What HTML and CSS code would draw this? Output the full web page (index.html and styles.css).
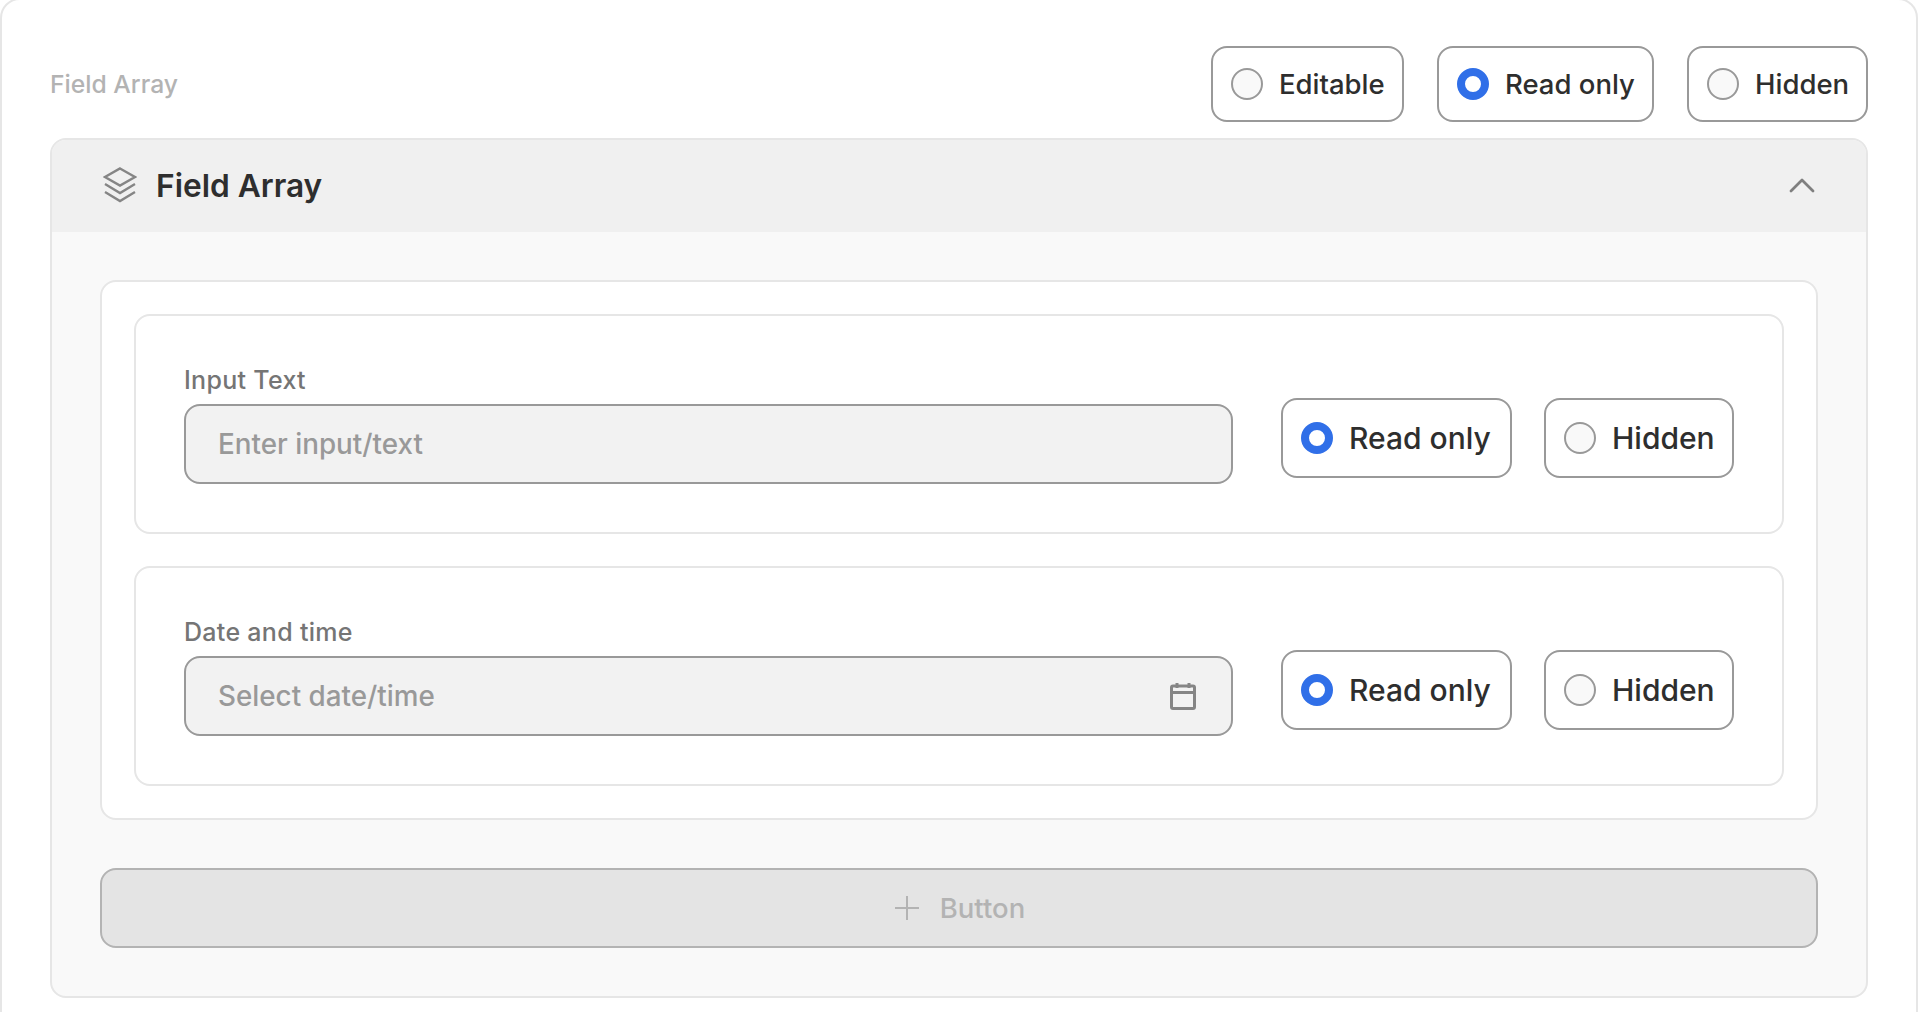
FILE: index.html
```html
<!DOCTYPE html>
<html lang="en">
<head>
<meta charset="utf-8">
<title>Field Array</title>
<link rel="stylesheet" href="styles.css">
</head>
<body>
<main class="sheet">
  <div class="top-row">
    <span class="section-label">Field Array</span>
    <div class="chips">
      <label class="chip w-editable"><span class="radio"></span><span>Editable</span></label>
      <label class="chip w-readonly"><span class="radio on"></span><span>Read only</span></label>
      <label class="chip w-hidden"><span class="radio"></span><span>Hidden</span></label>
    </div>
  </div>
  <section class="panel">
    <header class="panel-head">
      <div class="panel-title">
        <svg class="layers" viewBox="0 0 34 36" fill="none" stroke="#858585" stroke-width="2.4" stroke-linejoin="miter"><path d="M17 1.5 32 10 17 18.5 2 10Z"/><path d="M2 17 17 26 32 17"/><path d="M2 25 17 34 32 25"/></svg>
        <h2>Field Array</h2>
      </div>
      <svg class="chev" viewBox="0 0 26 16" fill="none" stroke="#7f7f7f" stroke-width="2.8" stroke-linecap="round" stroke-linejoin="round"><path d="M2 14 13 3 24 14"/></svg>
    </header>
    <div class="panel-body">
      <div class="card">
        <div class="row">
          <div class="field">
            <span class="field-label">Input Text</span>
            <div class="input"><span>Enter input/text</span></div>
          </div>
          <div class="chips row-chips">
            <label class="chip w-readonly"><span class="radio on"></span><span>Read only</span></label>
            <label class="chip w-hidden"><span class="radio"></span><span>Hidden</span></label>
          </div>
        </div>
        <div class="row">
          <div class="field">
            <span class="field-label">Date and time</span>
            <div class="input"><span>Select date/time</span>
              <svg class="cal" viewBox="0 0 26 28" fill="none" stroke="#858585" stroke-width="3"><rect x="1.5" y="4" width="23" height="22.5" rx="1.5"/><path d="M1.5 10.5H24.5"/><path d="M7 1V6M19 1V6"/></svg>
            </div>
          </div>
          <div class="chips row-chips">
            <label class="chip w-readonly"><span class="radio on"></span><span>Read only</span></label>
            <label class="chip w-hidden"><span class="radio"></span><span>Hidden</span></label>
          </div>
        </div>
      </div>
      <button class="add" type="button">
        <svg class="plus" viewBox="0 0 24 24" fill="none" stroke="#b3b3b3" stroke-width="2"><path d="M12 0V24M0 12H24"/></svg>
        <span>Button</span>
      </button>
    </div>
  </section>
</main>
</body>
</html>
```
FILE: styles.css
```css
* { box-sizing: border-box; }
html, body { margin: 0; padding: 0; background: #fff; height: 100%; overflow: hidden; }
body { font-family: "Inter", "Noto Sans", sans-serif; color: #2e2e2e; }

.sheet {
  width: 1918px;
  height: 1040px;
  margin-top: -2px;
  padding: 46px 48px 0 48px;
  border: 2px solid #e6e6e6;
  border-radius: 20px;
  background: #fff;
  display: flex;
  flex-direction: column;
  align-items: stretch;
}
.sheet > * { width: 1818px; flex: none; }

.top-row { display: flex; justify-content: space-between; align-items: center; height: 76px; margin-bottom: 16px; }
.section-label { font-size: 24.7px; font-weight: 500; color: #b3b3b3; }

.chips { display: flex; gap: 33px; }
.chip {
  display: flex;
  align-items: center;
  gap: 16px;
  height: 76px;
  padding: 0 18px;
  border: 2px solid #999;
  border-radius: 16px;
  background: #fff;
  font-size: 27.5px;
  font-weight: 500;
  white-space: nowrap;
}
.w-editable { width: 193px; }
.w-readonly { width: 217px; }
.w-hidden { width: 181px; }
.radio {
  width: 32px;
  height: 32px;
  flex: none;
  border: 2px solid #999;
  border-radius: 50%;
  background: #f9f9f9;
}
.radio.on { border: 8px solid #306fe8; background: #fff; }

.panel { height: 860px; border: 2px solid #e6e6e6; border-radius: 16px; background: #f9f9f9; overflow: hidden; }
.panel-head { height: 92px; background: #f0f0f0; display: flex; justify-content: space-between; align-items: center; padding: 0 51px 2px 51px; }
.panel-title { display: flex; align-items: center; gap: 19px; }
.panel-title h2 { margin: 0; font-size: 31.7px; font-weight: 600; color: #2e2e2e; }
.layers { width: 34px; height: 36px; display: block; }
.chev { width: 26px; height: 16px; display: block; }

.panel-body { padding: 48px 48px 0; display: flex; flex-direction: column; gap: 48px; }
.card { border: 2px solid #e6e6e6; border-radius: 16px; background: #fff; padding: 32px; display: flex; flex-direction: column; gap: 32px; }
.row { border: 2px solid #e6e6e6; border-radius: 16px; padding: 48px; display: flex; gap: 48px; align-items: flex-start; }
.field { flex: 1; display: flex; flex-direction: column; gap: 8px; }
.field-label { font-size: 25px; letter-spacing: 0.3px; font-weight: 500; color: #757575; line-height: 32px; }
.input {
  height: 80px;
  border: 2px solid #999;
  border-radius: 16px;
  background: #f2f2f2;
  display: flex;
  align-items: center;
  justify-content: space-between;
  padding: 0 35px 0 32px;
  font-size: 27.8px;
  font-weight: 500;
  color: #999;
}
.cal { width: 26px; height: 28px; display: block; }
.row-chips { margin-top: 34px; gap: 32px; }
.row-chips .chip { height: 80px; font-size: 30px; }
.row-chips .w-readonly { width: 231px; }
.row-chips .w-hidden { width: 190px; }

.add {
  height: 80px;
  width: 100%;
  border: 2px solid #b3b3b3;
  border-radius: 16px;
  background: #e4e4e4;
  display: flex;
  align-items: center;
  justify-content: center;
  gap: 21px;
  padding: 0 0 0 2px;
  font-family: inherit;
  font-size: 27.5px;
  font-weight: 500;
  color: #b3b3b3;
}
.plus { width: 24px; height: 24px; display: block; }
```
